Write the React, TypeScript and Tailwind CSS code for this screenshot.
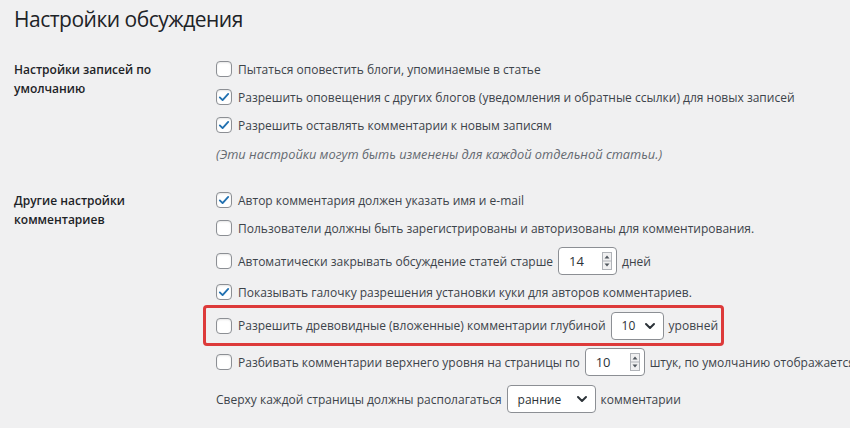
import React from "react";

const font = { fontFamily: '"Open Sans", "Noto Sans", sans-serif' };

function Check({ checked }: { checked?: boolean }) {
  return (
    <span className="flex h-[16px] w-[16px] shrink-0 items-center justify-center rounded-[4px] border border-[#8c8f94] bg-white shadow-[inset_0_1px_2px_rgba(0,0,0,0.1)]">
      {checked && (
        <svg width="14" height="14" viewBox="0 0 20 20">
          <path d="M4 10.5l4 4 8-9" fill="none" stroke="#2271b1" strokeWidth="2.6" strokeLinecap="round" strokeLinejoin="round" />
        </svg>
      )}
    </span>
  );
}

function Spin({ value, w }: { value: string; w: string }) {
  return (
    <span className={`mx-[5px] flex h-[28px] ${w} items-center justify-between rounded-[4px] border border-[#8c8f94] bg-white pl-[10px] pr-[4px] text-[13px] text-[#2c3338]`}>
      <span>{value}</span>
      <svg width="10" height="18" viewBox="0 0 10 18">
        <rect x="0.5" y="0.5" width="9" height="17" fill="#f0f0f1" stroke="#b0b3b8" />
        <line x1="0.5" y1="9" x2="9.5" y2="9" stroke="#b0b3b8" />
        <path d="M2.5 6.5L5 3.5L7.5 6.5Z" fill="#50575e" />
        <path d="M2.5 11.5L5 14.5L7.5 11.5Z" fill="#50575e" />
      </svg>
    </span>
  );
}

function Select({ value, w }: { value: string; w: string }) {
  return (
    <span className={`mx-[5px] flex h-[28px] ${w} items-center justify-between rounded-[4px] border border-[#8c8f94] bg-white pl-[10px] pr-[7px] text-[#2c3338]`}>
      <span>{value}</span>
      <svg width="12" height="12" viewBox="0 0 12 12">
        <path d="M2 4l4 4 4-4" fill="none" stroke="#2c3338" strokeWidth="2" strokeLinecap="round" strokeLinejoin="round" />
      </svg>
    </span>
  );
}

function Row({ checked, children, h = "h-[28px]", box = true }: { checked?: boolean; children: React.ReactNode; h?: string; box?: boolean }) {
  return (
    <div className={`flex ${h} items-center whitespace-nowrap`}>
      {box && <Check checked={checked} />}
      <span className={box ? "ml-[6px] flex items-center" : "flex items-center"}>{children}</span>
    </div>
  );
}

export default function App() {
  return (
    <div className="h-[428px] w-[850px] overflow-hidden bg-[#f0f0f1] text-[12px] leading-[19px] text-[#3c434a]" style={font}>
      <div className="pl-[14px]">
        <h1 className="pt-[5px] text-[21px] font-normal leading-[29px] tracking-[-0.5px] text-[#1d2327]">Настройки обсуждения</h1>

        <div className="mt-[21px] flex">
          <div className="w-[202px] shrink-0 pt-[5px] text-[12px] font-semibold leading-[19px] text-[#1d2327]">
            Настройки записей по
            <br />
            умолчанию
          </div>
          <div className="flex flex-col">
            <Row>Пытаться оповестить блоги, упоминаемые в статье</Row>
            <Row checked>Разрешить оповещения с других блогов (уведомления и обратные ссылки) для новых записей</Row>
            <Row checked>Разрешить оставлять комментарии к новым записям</Row>
            <div className="flex h-[30px] items-center text-[12.8px] italic text-[#646970]">
              (Эти настройки могут быть изменены для каждой отдельной статьи.)
            </div>
          </div>
        </div>

        <div className="mt-[17px] flex">
          <div className="w-[202px] shrink-0 pt-[5px] text-[12px] font-semibold leading-[19px] text-[#1d2327]">
            Другие настройки
            <br />
            комментариев
          </div>
          <div className="flex flex-col">
            <Row checked>Автор комментария должен указать имя и e-mail</Row>
            <Row>Пользователи должны быть зарегистрированы и авторизованы для комментирования.</Row>
            <Row h="h-[34px] mt-[2px]">
              Автоматически закрывать обсуждение статей старше
              <Spin value="14" w="w-[59px]" />
              дней
            </Row>
            <Row checked h="h-[28px]">Показывать галочку разрешения установки куки для авторов комментариев.</Row>
            <div className="-ml-[13px] mt-[-1px] flex h-[41px] w-[521px] items-center whitespace-nowrap rounded-[4px] border-[3px] border-[#dd3a3a] pl-[10px]">
              <Check />
              <span className="ml-[6px] flex items-center">
                Разрешить древовидные (вложенные) комментарии глубиной
                <Select value="10" w="w-[53px]" />
                уровней
              </span>
            </div>
            <Row h="h-[34px] mt-[-1px]">
              Разбивать комментарии верхнего уровня на страницы по
              <Spin value="10" w="w-[60px]" />
              штук, по умолчанию отображается
            </Row>
            <Row box={false} h="h-[34px] mt-[3px]">
              Сверху каждой страницы должны располагаться
              <Select value="ранние" w="w-[89px]" />
              комментарии
            </Row>
          </div>
        </div>
      </div>
    </div>
  );
}
